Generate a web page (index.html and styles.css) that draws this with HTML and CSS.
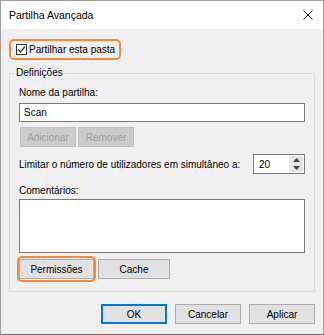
FILE: index.html
```html
<!DOCTYPE html>
<html lang="pt">
<head>
  <meta charset="UTF-8">
  <title>Partilha Avançada</title>
  <link rel="stylesheet" href="styles.css">
</head>
<body>
  <div class="window">
    <div class="titlebar">
      <span class="title">Partilha Avançada</span>
      <svg class="close" width="10" height="10" viewBox="0 0 10 10">
        <path d="M0.5 0.5 L9.5 9.5 M9.5 0.5 L0.5 9.5" stroke="#222" stroke-width="1" fill="none"/>
      </svg>
    </div>
    <div class="content">
      <label class="share-check highlight">
        <span class="checkbox">
          <svg width="9" height="9" viewBox="0 0 9 9">
            <path d="M1 4.5 L3.5 7 L8 1.5" stroke="#333" stroke-width="1.2" fill="none"/>
          </svg>
        </span>
        Partilhar esta pasta
      </label>

      <fieldset class="group">
        <legend>Definições</legend>
        <div class="group-body">
          <div class="label first">Nome da partilha:</div>
          <div class="textbox">Scan</div>
          <div class="button-row">
            <button class="btn small" disabled>Adicionar</button>
            <button class="btn small" disabled>Remover</button>
          </div>
          <div class="limit-row">
            <span>Limitar o número de utilizadores em simultâneo a:</span>
            <div class="spinner">
              <span class="spin-value">20</span>
              <span class="spin-buttons">
                <svg width="7" height="4" viewBox="0 0 7 4"><path d="M0 4 L3.5 0 L7 4 Z" fill="#444"/></svg>
                <svg width="7" height="4" viewBox="0 0 7 4"><path d="M0 0 L3.5 4 L7 0 Z" fill="#444"/></svg>
              </span>
            </div>
          </div>
          <div class="label comments">Comentários:</div>
          <div class="textarea"></div>
          <div class="button-row bottom">
            <span class="highlight btn-wrap"><button class="btn wide">Permissões</button></span>
            <button class="btn cache">Cache</button>
          </div>
        </div>
      </fieldset>

      <div class="dialog-buttons">
        <button class="btn default">OK</button>
        <button class="btn">Cancelar</button>
        <button class="btn">Aplicar</button>
      </div>
    </div>
  </div>
</body>
</html>
```

FILE: styles.css
```css
body {
  margin: 0;
  font-family: "Liberation Sans", Arial, sans-serif;
  font-size: 10px;
  color: #000;
}
.window {
  width: 324px;
  height: 335px;
  box-sizing: border-box;
  border: 1px solid #a0a0a0;
  border-bottom-color: #6e6e6e;
  display: flex;
  flex-direction: column;
  background: #f0f0f0;
}
.titlebar {
  height: 28px;
  background: #fff;
  display: flex;
  align-items: center;
  justify-content: space-between;
  padding: 0 10px 0 8px;
}
.title {
  font-size: 10.5px;
}
.content {
  flex: 1;
  padding: 10px 8px 0 8px;
}
.highlight {
  border: 2px solid #f58a3c;
  border-radius: 5px;
}
.share-check {
  display: flex;
  align-items: center;
  width: 112px;
  height: 21px;
  box-sizing: border-box;
  padding-left: 5px;
  gap: 2px;
  white-space: nowrap;
}
.checkbox {
  width: 11px;
  height: 11px;
  box-sizing: border-box;
  border: 1px solid #333;
  background: #fff;
  display: flex;
  align-items: center;
  justify-content: center;
}
.group {
  margin: 6px 0 0 0;
  padding: 0;
  border: 1px solid #dcdcdc;
  min-width: 0;
}
.group legend {
  margin-left: 4px;
  padding: 0 2px;
  line-height: 14px;
}
.group-body {
  padding: 0 9px 9px 9px;
}
.label {
  line-height: 14px;
}
.label.first {
  margin-top: 6px;
}
.textbox, .textarea, .spinner {
  background: #fff;
  border: 1px solid #7a7a7a;
  box-sizing: border-box;
}
.textbox {
  margin-top: 3px;
  height: 19px;
  line-height: 17px;
  padding-left: 4px;
}
.button-row {
  display: flex;
  gap: 2px;
  margin-top: 5px;
  margin-left: 1px;
}
.btn {
  font-family: inherit;
  font-size: inherit;
  color: #000;
  background: #e1e1e1;
  border: 1px solid #adadad;
  height: 20px;
  width: 66px;
  padding: 0;
  box-sizing: border-box;
}
.btn.small {
  width: 56px;
}
.btn:disabled {
  background: #cccccc;
  border-color: #bfbfbf;
  color: #a0a0a0;
}
.limit-row {
  display: flex;
  align-items: center;
  justify-content: space-between;
  margin-top: 7px;
}
.spinner {
  width: 52px;
  height: 20px;
  display: flex;
  align-items: center;
  justify-content: space-between;
  padding: 0 1px 0 5px;
}
.spin-buttons {
  width: 14px;
  height: 16px;
  background: #e6e6e6;
  display: flex;
  flex-direction: column;
  align-items: center;
  justify-content: space-around;
}
.spin-buttons svg {
  display: block;
}
.label.comments {
  margin-top: 10px;
}
.textarea {
  margin-top: 1px;
  height: 54px;
}
.button-row.bottom {
  margin: 3px 0 0 -2px;
  align-items: center;
}
.btn-wrap {
  display: flex;
  padding: 1px 0;
}
.btn.wide {
  width: 75px;
}
.btn.cache {
  width: 72px;
}
.dialog-buttons {
  display: flex;
  justify-content: flex-end;
  gap: 8px;
  margin-top: 12px;
}
.btn.default {
  border-color: #0078d7;
  box-shadow: inset 0 0 0 1px #0078d7;
}
```
